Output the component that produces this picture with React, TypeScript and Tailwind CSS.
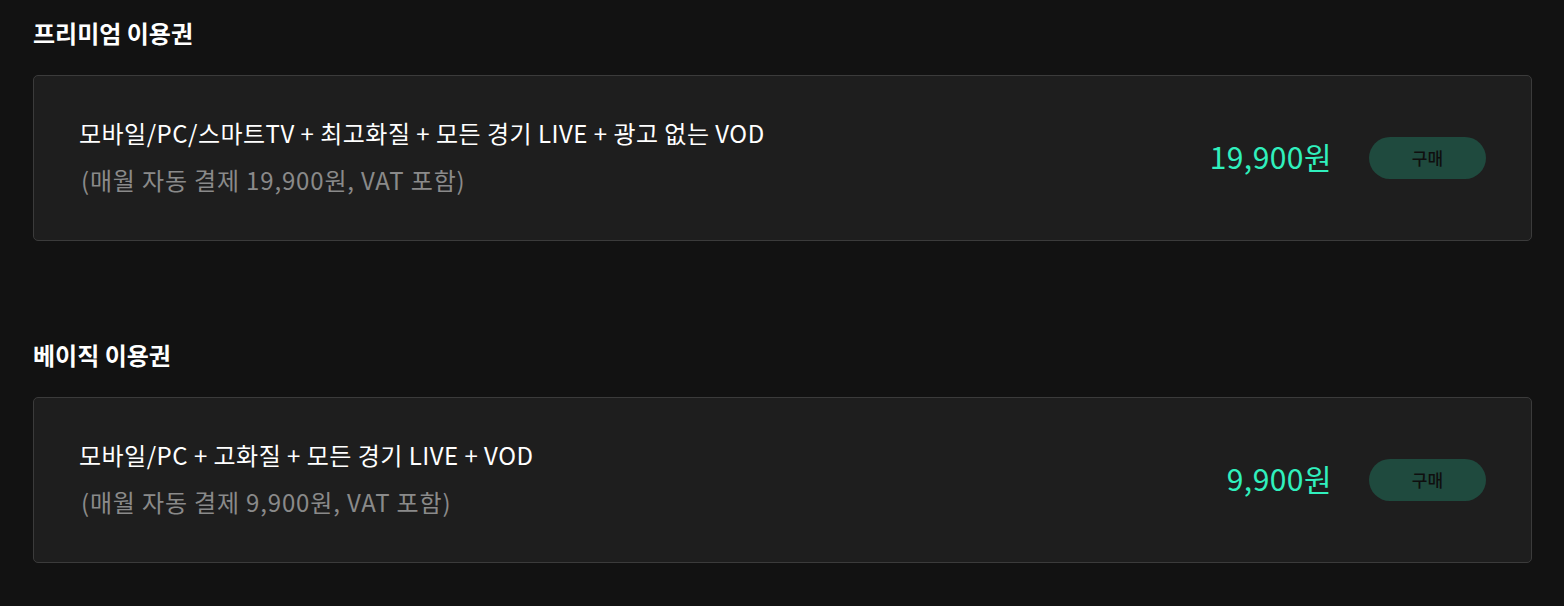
import React from 'react'

interface Plan {
    id: string;
    heading: string;
    title: string;
    sub: string;
    price: string;
}

const plans: Plan[] = [
    {
        id: 'premium',
        heading: '프리미엄 이용권',
        title: '모바일/PC/스마트TV + 최고화질 + 모든 경기 LIVE + 광고 없는 VOD',
        sub: '(매월 자동 결제 19,900원, VAT 포함)',
        price: '19,900원',
    },
    {
        id: 'basic',
        heading: '베이직 이용권',
        title: '모바일/PC + 고화질 + 모든 경기 LIVE + VOD',
        sub: '(매월 자동 결제 9,900원, VAT 포함)',
        price: '9,900원',
    },
];

const font = { fontFamily: '"Noto Sans CJK KR", "Noto Sans", sans-serif' };

const App: React.FC = () => {
    return (
        <div className="min-h-screen bg-[#121212] pl-[33px] pr-[32px] pt-[16px] pb-[40px]" style={font}>
            <div className="flex flex-col gap-[97px]">
                {plans.map((plan) => (
                    <section key={plan.id}>
                        <h2 className="text-[24px] leading-[34px] font-bold text-white">
                            {plan.heading}
                        </h2>
                        <div className="mt-[25px] h-[166px] flex items-center justify-between rounded-[5px] border border-[#3b3b3b] bg-[#1e1e1e] pl-[45px] pr-[45px]">
                            <div className="flex flex-col gap-[13px] pb-[4px]">
                                <div className="text-[24px] leading-[34px] text-white tracking-[0.02em]">
                                    {plan.title}
                                </div>
                                <div className="pl-[2px] text-[24px] leading-[34px] text-[#8a8a8a] tracking-[0.035em]">
                                    {plan.sub}
                                </div>
                            </div>
                            <div className="flex items-center gap-[37px]">
                                <span className="pb-[4px] text-[30px] leading-[38px] text-[#30f0bd] tracking-[0.015em]">
                                    {plan.price}
                                </span>
                                <button className="w-[117px] h-[42px] rounded-full bg-[#1f4a3e] text-[17px] font-medium text-[#0f0f0f]">
                                    구매
                                </button>
                            </div>
                        </div>
                    </section>
                ))}
            </div>
        </div>
    )
}

export default App
